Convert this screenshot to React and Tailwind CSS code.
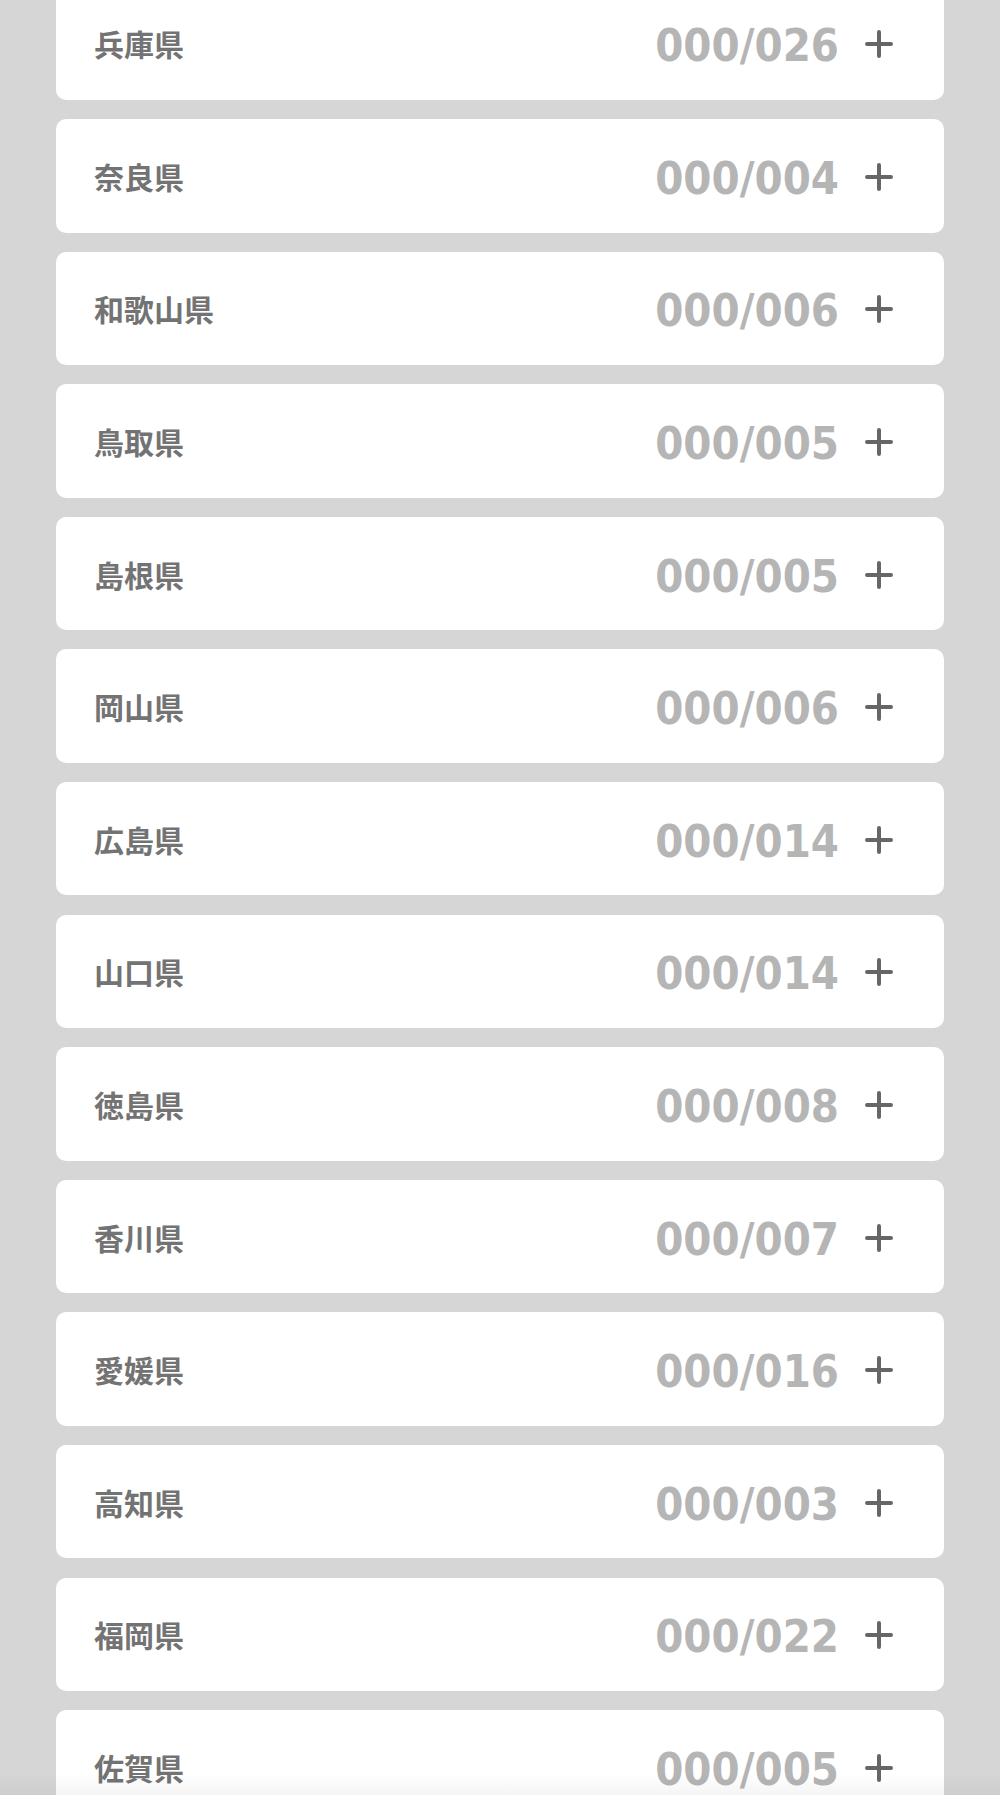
const PREFECTURES = [
  { name: '兵庫県', count: '000/026' },
  { name: '奈良県', count: '000/004' },
  { name: '和歌山県', count: '000/006' },
  { name: '鳥取県', count: '000/005' },
  { name: '島根県', count: '000/005' },
  { name: '岡山県', count: '000/006' },
  { name: '広島県', count: '000/014' },
  { name: '山口県', count: '000/014' },
  { name: '徳島県', count: '000/008' },
  { name: '香川県', count: '000/007' },
  { name: '愛媛県', count: '000/016' },
  { name: '高知県', count: '000/003' },
  { name: '福岡県', count: '000/022' },
  { name: '佐賀県', count: '000/005' },
  { name: '長崎県', count: '000/012' },
];

function PlusIcon() {
  return (
    <svg width="28" height="28" viewBox="0 0 28 28" className="shrink-0 mt-[2px]">
      <path d="M14 2v24M2 14h24" stroke="#666666" strokeWidth="4" strokeLinecap="round" fill="none" />
    </svg>
  );
}

function PrefectureRow({ item }) {
  return (
    <div className="h-[113.5px] shrink-0 bg-white rounded-[10px] flex items-center pl-[38px] pr-[51px]">
      <span
        className="flex-1 text-[30px] font-bold text-[#737373] leading-none"
        style={{ fontFamily: '"Noto Sans CJK JP", "Noto Sans", sans-serif' }}
      >
        {item.name}
      </span>
      <span
        className="text-[45px] font-bold text-[#b5b5b5] tracking-[0px] leading-none mr-[26px] mt-[5px]"
        style={{ fontFamily: '"DejaVu Sans Condensed", "DejaVu Sans", sans-serif' }}
      >
        {item.count}
      </span>
      <PlusIcon />
    </div>
  );
}

export default function App() {
  return (
    <div className="relative w-[1000px] h-[1795px] overflow-hidden bg-[#d6d6d6]">
      <div className="flex flex-col gap-[19.1px] px-[56px] mt-[-13.6px]">
        {PREFECTURES.map((p) => (
          <PrefectureRow key={p.name} item={p} />
        ))}
      </div>
      <div className="absolute left-0 right-0 bottom-0 h-[22px] bg-gradient-to-b from-transparent to-black/[0.04]" />
    </div>
  );
}
